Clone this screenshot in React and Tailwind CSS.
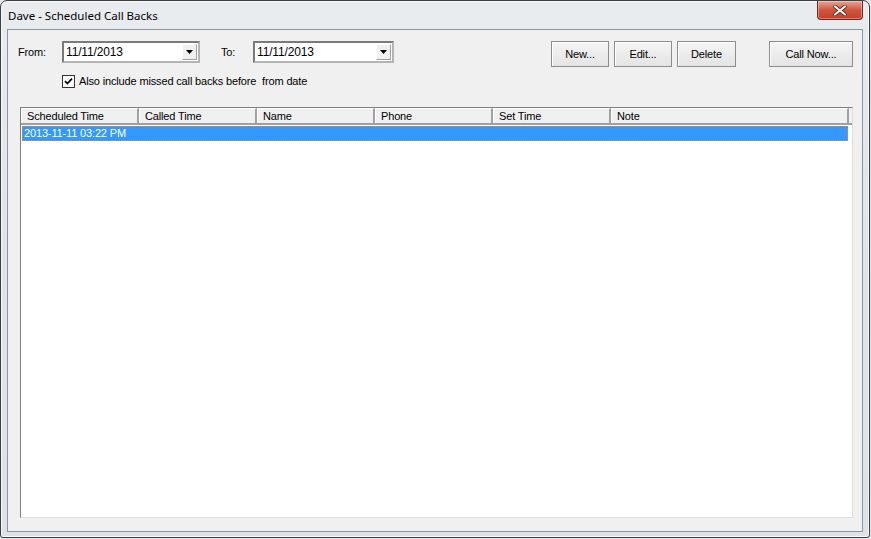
import React from "react";

const ui = { fontFamily: '"Liberation Sans", Arial, sans-serif', letterSpacing: "-0.15px" };
const title = { fontFamily: '"Noto Sans", "Open Sans", sans-serif', letterSpacing: "0" };

function Combo({ value, width }) {
  return (
    <div
      className="flex h-[22px] items-stretch border-2 border-t-[#7a7a7a] border-l-[#7a7a7a] border-b-[#b4b4b4] border-r-[#b4b4b4] bg-white"
      style={{ width }}
    >
      <div className="flex flex-1 items-center pl-[2px] text-[12px] text-black">{value}</div>
      <div className="m-[1px] flex w-[15px] items-center justify-center border border-t-[#fdfdfd] border-l-[#fdfdfd] border-b-[#a0a0a0] border-r-[#a0a0a0] bg-[#f0f0f0]">
        <svg width="7" height="4" viewBox="0 0 7 4">
          <path d="M0 0h7L3.5 4z" fill="#000" />
        </svg>
      </div>
    </div>
  );
}

function Btn({ label, w }) {
  return (
    <div
      className="flex h-[26px] items-center justify-center border border-[#8c8c8c] bg-gradient-to-b from-[#f4f4f4] to-[#e4e4e4] text-[11px] text-black shadow-[inset_1px_1px_0_#ffffff]"
      style={{ width: w }}
    >
      {label}
    </div>
  );
}

const cols = [
  ["Scheduled Time", 118],
  ["Called Time", 118],
  ["Name", 118],
  ["Phone", 118],
  ["Set Time", 118],
  ["Note", 238],
];

export default function App() {
  return (
    <div className="h-[539px] w-[871px] overflow-hidden bg-[#e6e8ea]" style={ui}>
      <div className="flex h-[538px] w-[870px] flex-col rounded-t-[7px] rounded-b-[3px] border border-[#3a3d42] bg-gradient-to-b from-[#e9ecef] via-[#dfe4e9] to-[#dde2e7] shadow-[inset_0_0_0_1px_#f6f8fa]">
        {/* title bar */}
        <div className="flex h-[28px] items-start justify-between">
          <div className="pl-[7px] pt-[6px] text-[11.5px] text-black" style={title}>
            Dave - Scheduled Call Backs
          </div>
          <div className="mr-[6px] flex h-[19px] w-[46px] items-center justify-center rounded-b-[4px] border border-t-0 border-[#6e2a22] bg-gradient-to-b from-[#e8a493] via-[#d0553d] to-[#c2402a] shadow-[inset_0_0_0_1px_rgba(255,255,255,0.35)]">
            <svg width="14" height="11" viewBox="0 0 14 11">
              <path
                d="M2 1.5L12 9.5M12 1.5L2 9.5"
                stroke="#5a2018"
                strokeWidth="3.6"
                strokeLinecap="round"
              />
              <path
                d="M2 1.5L12 9.5M12 1.5L2 9.5"
                stroke="#ffffff"
                strokeWidth="2.2"
                strokeLinecap="round"
              />
            </svg>
          </div>
        </div>

        {/* client area */}
        <div className="mx-[6px] flex h-[503px] flex-col border border-[#8a96a3] bg-[#f0f0f0]">
          <div className="flex h-[37px] items-start pl-[10px] pt-[11px]">
            <div className="flex h-[22px] w-[44px] items-center text-[11px]">From:</div>
            <Combo value="11/11/2013" width={138} />
            <div className="ml-[21px] flex h-[22px] w-[32px] items-center text-[11px]">To:</div>
            <Combo value="11/11/2013" width={141} />
            <div className="ml-[157px] flex gap-[5px]">
              <Btn label="New..." w={58} />
              <Btn label="Edit..." w={58} />
              <Btn label="Delete" w={59} />
            </div>
            <div className="ml-[33px]">
              <Btn label="Call Now..." w={84} />
            </div>
          </div>

          <div className="ml-[54px] mt-[8px] flex h-[13px] items-center gap-[4px] text-[11px]">
            <div className="flex h-[13px] w-[13px] items-center justify-center border border-[#333] bg-white">
              <svg width="9" height="9" viewBox="0 0 9 9">
                <path d="M1 4.2l2.4 2.4L8 1.6" stroke="#000" strokeWidth="1.7" fill="none" />
              </svg>
            </div>
            <span>Also include missed call backs before&nbsp; from date</span>
          </div>

          {/* list view */}
          <div className="ml-[12px] mt-[19px] flex h-[411px] w-[833px] flex-col border border-t-[#7f7f7f] border-l-[#7f7f7f] border-b-[#dcdcdc] border-r-[#dcdcdc] bg-white">
            <div className="flex h-[17px] border-b-2 border-[#a0a0a0] bg-[#f0f0f0]">
              {cols.map(([name, w]) => (
                <div
                  key={name}
                  className="flex items-center border-r-2 border-[#a0a0a0] border-l border-l-white border-t border-t-white pl-[5px] text-[11px] text-black"
                  style={{ width: w }}
                >
                  {name}
                </div>
              ))}
            </div>
            <div className="mx-[1px] mt-[1px] flex h-[15px] w-[826px] items-center border border-dotted border-[#e08a2c] bg-[#3399ff] pl-[1px] text-[11px] text-white">
              2013-11-11 03:22 PM
            </div>
          </div>
        </div>
      </div>
    </div>
  );
}
